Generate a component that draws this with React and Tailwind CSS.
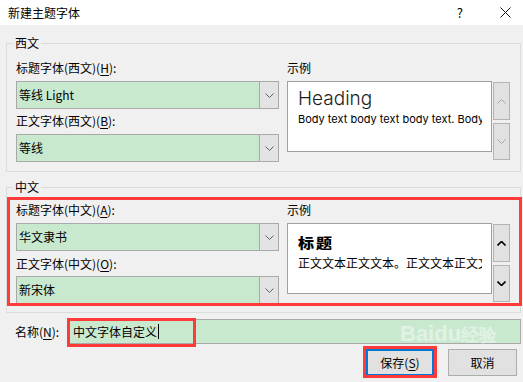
import React from 'react';

const FONT = { fontFamily: '"Noto Sans CJK SC", "Noto Sans", sans-serif' };

const Chevron = ({ up = false, color = '#606060', width = 1 }) => (
  <svg width="9" height="5" viewBox="0 0 9 5">
    <path
      d={up ? 'M0.5 4.5 L4.5 0.5 L8.5 4.5' : 'M0.5 0.5 L4.5 4.5 L8.5 0.5'}
      stroke={color}
      strokeWidth={width}
      fill="none"
    />
  </svg>
);

const Combo = ({ value, className = '' }) => (
  <div className={`flex h-[28px] w-[263px] border border-[#a9a9a9] bg-[#c9e9cf] ${className}`}>
    <div className="flex flex-1 items-center pl-[2px] text-[12px] text-black">{value}</div>
    <div className="flex w-[19px] items-center justify-center border-l border-[#a9a9a9] bg-[#e3e3e3]">
      <Chevron />
    </div>
  </div>
);

const Label = ({ children, className = '' }) => (
  <div className={`h-[16px] text-[12px] leading-[16px] text-black ${className}`}>{children}</div>
);

const U = ({ children }) => <span className="underline underline-offset-2">{children}</span>;

const ScrollButtons = ({ enabled }) => {
  const color = enabled ? '#000000' : '#a6a6a6';
  const w = enabled ? 1.6 : 1;
  return (
    <div className="flex w-[17px] flex-col gap-[3px] pt-[1px]">
      <div className="flex h-[38px] items-center justify-center border border-[#b4b4b4] bg-[#e1e1e1]">
        <Chevron up color={color} width={w} />
      </div>
      <div className="flex h-[37px] items-center justify-center border border-[#b4b4b4] bg-[#e1e1e1]">
        <Chevron color={color} width={w} />
      </div>
    </div>
  );
};

const Group = ({ title, className = '', children }) => (
  <div className={`relative w-[515px] border border-[#dcdcdc] ${className}`}>
    <span className="absolute -top-[9px] left-[6px] bg-[#f0f0f0] px-[2px] text-[12px] leading-[16px] text-black">
      {title}
    </span>
    {children}
  </div>
);

export default function App() {
  return (
    <div className="relative h-[382px] w-[523px] overflow-hidden bg-[#f0f0f0]" style={FONT}>
      {/* title bar */}
      <div className="flex h-[25px] items-center justify-between bg-white pl-[8px] pr-[12px]">
        <span className="text-[12px] text-black">新建主题字体</span>
        <div className="flex items-center gap-[37px]">
          <span className="text-[13px] text-black">?</span>
          <svg width="11" height="11" viewBox="0 0 11 11">
            <path d="M0.5 0.5 L10.5 10.5 M10.5 0.5 L0.5 10.5" stroke="#111" strokeWidth="1" />
          </svg>
        </div>
      </div>

      <div className="pl-[6px]">
        {/* 西文 */}
        <Group title="西文" className="mt-[18px] pb-[9px]">
          <div className="flex gap-[8px] pl-[9px] pt-[16px]">
            <div className="flex flex-col">
              <Label>标题字体(西文)(<U>H</U>):</Label>
              <Combo value="等线 Light" className="mt-[5px]" />
              <Label className="mt-[4px]">正文字体(西文)(<U>B</U>):</Label>
              <Combo value="等线" className="mt-[5px]" />
            </div>
            <div className="flex flex-col">
              <Label>示例</Label>
              <div className="mt-[5px] flex gap-[1px]">
                <div className="h-[71px] w-[205px] overflow-hidden border border-[#a0a0a0] bg-white pl-[10px] pr-[9px] pt-[5px]">
                  <div className="whitespace-nowrap text-[19px] font-light leading-[24px] text-[#1e1e1e]" style={{ fontFamily: 'Inter, sans-serif' }}>
                    Heading
                  </div>
                  <div className="overflow-hidden whitespace-nowrap text-[11px] leading-[16px] text-black" style={{ fontFamily: 'Inter, sans-serif' }}>
                    Body text body text body text. Body text
                  </div>
                </div>
                <ScrollButtons enabled={false} />
              </div>
            </div>
          </div>
        </Group>

        {/* 中文 */}
        <Group title="中文" className="mt-[15px] pb-[8px]">
          <div className="flex gap-[8px] pl-[9px] pt-[14px]">
            <div className="flex flex-col">
              <Label>标题字体(中文)(<U>A</U>):</Label>
              <Combo value="华文隶书" className="mt-[5px]" />
              <Label className="mt-[5px]">正文字体(中文)(<U>O</U>):</Label>
              <Combo value="新宋体" className="mt-[4px]" />
            </div>
            <div className="flex flex-col">
              <Label>示例</Label>
              <div className="mt-[5px] flex gap-[1px]">
                <div className="h-[71px] w-[205px] overflow-hidden border border-[#a0a0a0] bg-white pl-[10px] pr-[9px] pt-[6px]">
                  <div className="inline-block scale-y-85 text-[16px] font-black leading-[22px] tracking-[2px] text-black">
                    标题
                  </div>
                  <div className="overflow-hidden whitespace-nowrap text-[12px] leading-[18px] text-black">
                    正文文本正文文本。正文文本正文文本。
                  </div>
                </div>
                <ScrollButtons enabled />
              </div>
            </div>
          </div>
        </Group>

        {/* name row */}
        <div className="mt-[6px] flex items-center">
          <span className="w-[62px] pl-[9px] text-[12px] text-black">
            名称(<U>N</U>):
          </span>
          <div className="flex h-[25px] w-[453px] items-center border border-[#a9a9a9] bg-[#c9e9cf] pl-[4px] text-[12px] text-black">
            中文字体自定义
            <span className="ml-[1px] h-[15px] w-[1px] bg-black" />
          </div>
        </div>

        {/* buttons */}
        <div className="mt-[5px] flex justify-end gap-[14px] pr-[6px]">
          <button className="flex h-[27px] w-[68px] items-center justify-center border-2 border-[#0078d7] bg-[#e1e1e1] text-[12px] text-black">
            保存(<U>S</U>)
          </button>
          <button className="flex h-[27px] w-[69px] items-center justify-center border border-[#adadad] bg-[#e1e1e1] text-[12px] text-black">
            取消
          </button>
        </div>
      </div>

      {/* annotation boxes */}
      <div className="pointer-events-none absolute left-[7px] top-[197px] h-[109px] w-[515px] border-[3px] border-[#ff3a3a]" />
      <div className="pointer-events-none absolute left-[67px] top-[318px] h-[29px] w-[129px] border-[3px] border-[#ff3a3a]" />
      <div className="pointer-events-none absolute left-[363px] top-[346px] h-[32px] w-[74px] border-[3px] border-[#ff3a3a]" />

      {/* watermark */}
      <div className="pointer-events-none absolute left-[400px] top-[321px] opacity-45">
        <span className="text-[22px] font-bold leading-[26px] text-white" style={{ fontFamily: '"Liberation Sans", sans-serif' }}>
          Baidu<span className="text-[18px]">经验</span>
        </span>
      </div>
    </div>
  );
}
